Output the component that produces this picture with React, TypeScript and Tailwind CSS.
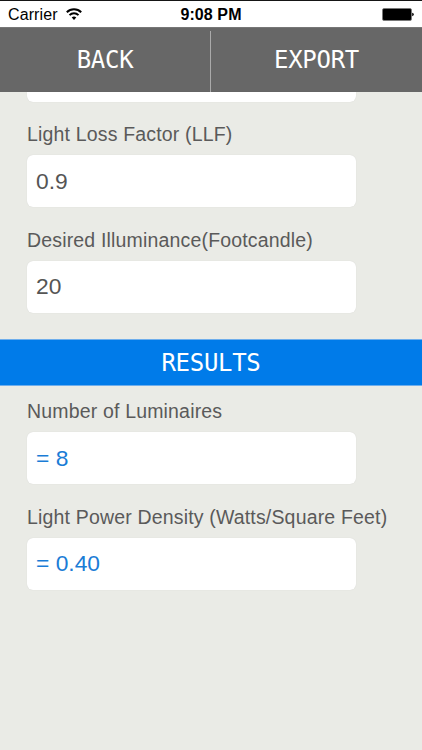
import React from "react";

const Field = ({
    label,
    value,
    result,
}: {
    label: string;
    value: string;
    result?: boolean;
}) => {
    return (
        <div className="h-[105.5px]">
            <label className="block h-9 pt-px text-[19.5px] leading-7 tracking-[0.17px] text-[#5a5a5a] whitespace-nowrap">
                {label}
            </label>
            <div
                className={`flex h-[52px] w-[329px] items-center rounded-md bg-white px-[9px] text-[22.8px] shadow-[0_0_1px_#00000022] ${
                    result ? "text-[#1a7cd6]" : "text-[#555555]"
                }`}
            >
                {value}
            </div>
        </div>
    );
};

const App = () => {
    return (
        <div className="h-[750px] w-[422px] overflow-hidden bg-[#eaebe6] font-['Liberation_Sans',sans-serif]">
            {/* Status bar */}
            <div className="grid h-[27px] grid-cols-3 items-center border-t border-[#151515] bg-white text-base text-black">
                <div className="flex items-center gap-2 pl-2 pt-px">
                    <span className="tracking-[0.1px]">Carrier</span>
                    <svg className="-mt-0.5" width="16" height="12" viewBox="0 0 16 12" fill="none" stroke="currentColor" strokeWidth="2">
                        <path d="M.8 4.3a10.2 10.2 0 0 1 14.4 0M3.5 7.1a6.4 6.4 0 0 1 9 0" />
                        <path d="M8 12 5.7 9.6a3.3 3.3 0 0 1 4.6 0Z" fill="currentColor" stroke="none" />
                    </svg>
                </div>
                <span className="pt-px text-center font-bold tracking-[0.1px]">9:08 PM</span>
                <div className="flex justify-end pr-2">
                    <svg width="32" height="13" viewBox="0 0 32 13">
                        <rect x="0.5" y="0.5" width="29" height="12" rx="1.5" fill="black" stroke="#777777" strokeWidth="0.8" />
                        <path d="M30.2 4.8q1.6 .3 1.6 1.7t-1.6 1.7Z" />
                    </svg>
                </div>
            </div>

            {/* Nav */}
            <div className="grid h-[65px] grid-cols-2 border-t border-[#777777] bg-[#676767] font-['DejaVu_Sans_Mono',monospace] text-[24px] tracking-[-0.3px] text-white">
                <button className="mt-[3px] border-r border-[#aaaaaa] pb-1">BACK</button>
                <button className="pb-px">EXPORT</button>
            </div>

            <div className="h-[247px] pl-[27px]">
                <div className="h-[10px] w-[329px] rounded-b-md bg-white shadow-[0_0_1px_#00000022]" />
                <div className="pt-[17px]">
                    <Field label="Light Loss Factor (LLF)" value="0.9" />
                    <Field label="Desired Illuminance(Footcandle)" value="20" />
                </div>
            </div>

            {/* Results */}
            <div className="flex h-[47px] items-center justify-center border-y border-[#6faeec] bg-[#007be9] font-['DejaVu_Sans_Mono',monospace] text-[24px] tracking-[-0.3px] text-white">
                RESULTS
            </div>
            <div className="pl-[27px] pt-[10px]">
                <Field label="Number of Luminaires" value="= 8" result />
                <Field label="Light Power Density (Watts/Square Feet)" value="= 0.40" result />
            </div>
        </div>
    );
};

export default App;
